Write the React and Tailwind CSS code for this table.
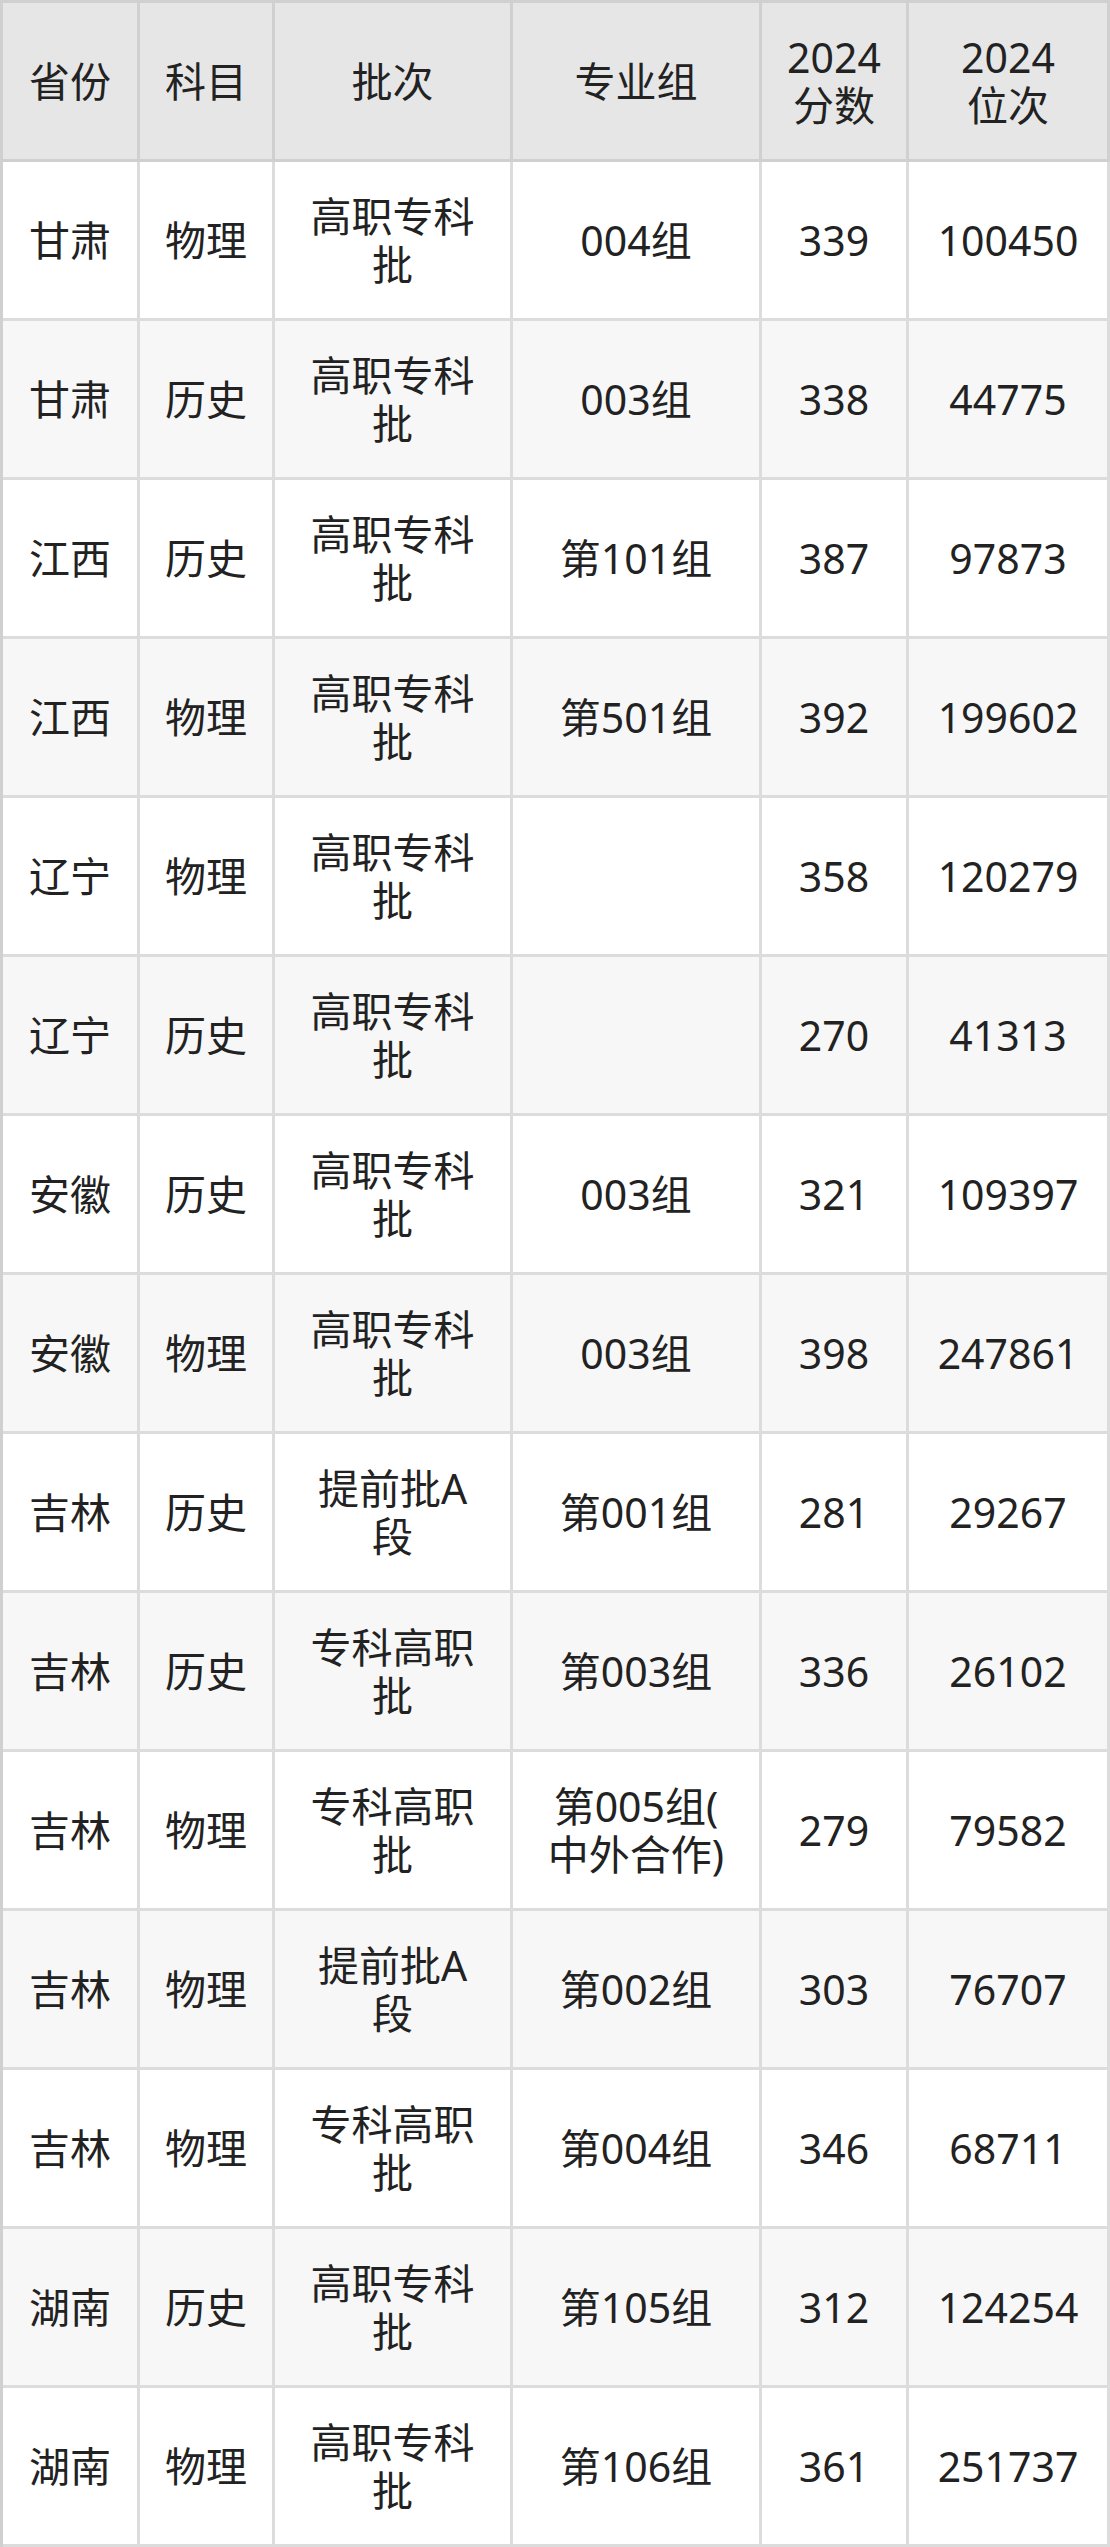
import React from "react";

const rows = [
  ["甘肃", "物理", ["高职专科", "批"], ["004组"], "339", "100450"],
  ["甘肃", "历史", ["高职专科", "批"], ["003组"], "338", "44775"],
  ["江西", "历史", ["高职专科", "批"], ["第101组"], "387", "97873"],
  ["江西", "物理", ["高职专科", "批"], ["第501组"], "392", "199602"],
  ["辽宁", "物理", ["高职专科", "批"], [], "358", "120279"],
  ["辽宁", "历史", ["高职专科", "批"], [], "270", "41313"],
  ["安徽", "历史", ["高职专科", "批"], ["003组"], "321", "109397"],
  ["安徽", "物理", ["高职专科", "批"], ["003组"], "398", "247861"],
  ["吉林", "历史", ["提前批A", "段"], ["第001组"], "281", "29267"],
  ["吉林", "历史", ["专科高职", "批"], ["第003组"], "336", "26102"],
  ["吉林", "物理", ["专科高职", "批"], ["第005组(", "中外合作)"], "279", "79582"],
  ["吉林", "物理", ["提前批A", "段"], ["第002组"], "303", "76707"],
  ["吉林", "物理", ["专科高职", "批"], ["第004组"], "346", "68711"],
  ["湖南", "历史", ["高职专科", "批"], ["第105组"], "312", "124254"],
  ["湖南", "物理", ["高职专科", "批"], ["第106组"], "361", "251737"],
];

function Cell({ lines, bg, header }) {
  const arr = Array.isArray(lines) ? lines : [lines];
  return (
    <div
      className={`flex h-[159px] flex-col items-center justify-center border-r-[3px] border-b-[3px] text-center ${
        header ? "border-[#d0d0d0]" : "border-[#dcdcdc]"
      } ${bg}`}
    >
      {arr.map((l, i) => (
        <div key={i} className="whitespace-nowrap leading-[48px]">
          {l}
        </div>
      ))}
    </div>
  );
}

export default function App() {
  const header = ["省份", "科目", "批次", "专业组", ["2024", "分数"], ["2024", "位次"]];
  return (
    <div
      className="w-[1110px] bg-white text-[#222222] text-[41px]"
      style={{ fontFamily: '"Noto Sans", "Noto Sans CJK SC", sans-serif' }}
    >
      <div className="grid grid-cols-[137px_135px_238px_249px_147px_201px] border-l-[3px] border-t-[3px] border-[#d0d0d0]">
        {header.map((h, i) => (
          <Cell key={"h" + i} lines={h} bg="bg-[#e6e6e6]" header />
        ))}
        {rows.map((r, ri) =>
          r.map((c, ci) => (
            <Cell
              key={ri + "-" + ci}
              lines={c}
              bg={ri % 2 === 0 ? "bg-white" : "bg-[#f7f7f7]"}
            />
          ))
        )}
      </div>
    </div>
  );
}
